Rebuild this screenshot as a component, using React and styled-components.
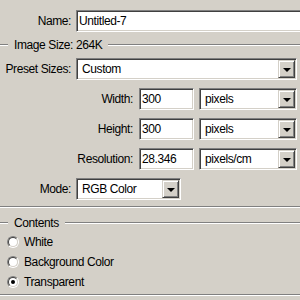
import React from 'react';
import styled, { createGlobalStyle } from 'styled-components';

const GlobalStyle = createGlobalStyle`
html, body {
  margin: 0;
  padding: 0;
  background: #d4d0c8;
}
`

const Dialog = styled.div`
width: 300px;
height: 300px;
overflow: hidden;
background: #d4d0c8;
font-family: "Liberation Sans", Arial, sans-serif;
font-size: 12px;
letter-spacing: -0.4px;
color: #000;
display: flex;
flex-direction: column;
`
const Row = styled.div`
display: flex;
align-items: center;
height: 22px;
margin-top: ${p => p.$top || 0}px;
margin-left: ${p => p.$left || 0}px;
flex-shrink: 0;
`
const Label = styled.div`
width: ${p => p.$width}px;
margin-right: ${p => p.$gap || 5}px;
text-align: right;
flex-shrink: 0;
white-space: nowrap;
`
const Sunken = styled.div`
box-sizing: border-box;
height: 22px;
width: ${p => p.$width}px;
flex-shrink: 0;
background: #fff;
border: 1px solid;
border-color: #808080 #fff #fff #808080;
box-shadow: inset 1px 1px #404040, inset -1px -1px #d4d0c8;
display: flex;
align-items: center;
white-space: nowrap;
overflow: hidden;
`
const InputText = styled.span`
padding-left: ${p => p.$pad || 2}px;
flex: 1;
`
const DropButton = styled.div`
box-sizing: border-box;
width: 17px;
height: 18px;
margin-right: 1px;
flex-shrink: 0;
background: #d4d0c8;
border: 1px solid;
border-color: #d4d0c8 #404040 #404040 #d4d0c8;
box-shadow: inset 1px 1px #fff, inset -1px -1px #808080;
display: flex;
align-items: center;
justify-content: center;
&::after {
  content: '';
  width: 0;
  height: 0;
  border-left: 4px solid transparent;
  border-right: 4px solid transparent;
  border-top: 4px solid #000;
  margin-top: 1px;
}
`
const Group = styled.div`
display: flex;
align-items: center;
height: 14px;
margin-top: ${p => p.$top || 0}px;
flex-shrink: 0;
`
const Line = styled.div`
height: 0;
border-top: 1px solid #808080;
border-bottom: 1px solid #fff;
width: ${p => (p.$width ? `${p.$width}px` : 'auto')};
flex: ${p => (p.$width ? '0 0 auto' : '1')};
`
const GroupTitle = styled.span`
padding: 0 6px;
white-space: nowrap;
`
const Separator = styled(Line)`
margin-top: ${p => p.$top || 0}px;
flex: 0 0 auto;
`
const RadioRow = styled.label`
display: flex;
align-items: center;
height: 20px;
padding-left: 7px;
margin-top: ${p => p.$top || 0}px;
flex-shrink: 0;
`
const RadioOuter = styled.span`
box-sizing: border-box;
width: 12px;
height: 12px;
border-radius: 50%;
border: 1px solid;
border-color: #808080 #fff #fff #808080;
margin-right: 5px;
display: flex;
`
const RadioInner = styled.span`
box-sizing: border-box;
flex: 1;
border-radius: 50%;
border: 1px solid;
border-color: #404040 #d4d0c8 #d4d0c8 #404040;
background: #fff;
display: flex;
align-items: center;
justify-content: center;
&::after {
  content: '';
  width: 4px;
  height: 4px;
  border-radius: 50%;
  background: ${p => (p.$checked ? '#000' : 'transparent')};
}
`

const Select = ({ width, value }) => (
  <Sunken $width={width}>
    <InputText $pad={5}>{value}</InputText>
    <DropButton />
  </Sunken>
);

const Radio = ({ label, checked, top }) => (
  <RadioRow $top={top}>
    <RadioOuter><RadioInner $checked={checked} /></RadioOuter>
    {label}
  </RadioRow>
);

const DimRow = ({ label, value, unit, top }) => (
  <Row $top={top}>
    <Label $width={133} $gap={6}>{label}</Label>
    <Sunken $width={55}><InputText>{value}</InputText></Sunken>
    <Row $left={5}>
      <Select width={98} value={unit} />
    </Row>
  </Row>
);

export default function App() {
  return (
    <Dialog>
      <GlobalStyle />
      <Row $top={10}>
        <Label $width={71}>Name:</Label>
        <Sunken $width={240}><InputText>Untitled-7</InputText></Sunken>
      </Row>
      <Group $top={6}>
        <Line $width={8} />
        <GroupTitle>Image Size: 264K</GroupTitle>
        <Line />
      </Group>
      <Row $top={6}>
        <Label $width={71}>Preset Sizes:</Label>
        <Select width={221} value="Custom" />
      </Row>
      <DimRow top={8} label="Width:" value="300" unit="pixels" />
      <DimRow top={8} label="Height:" value="300" unit="pixels" />
      <DimRow top={8} label="Resolution:" value="28.346" unit="pixels/cm" />
      <Row $top={8}>
        <Label $width={71}>Mode:</Label>
        <Select width={105} value="RGB Color" />
      </Row>
      <Separator $top={6} />
      <Group $top={8}>
        <Line $width={8} />
        <GroupTitle>Contents</GroupTitle>
        <Line />
      </Group>
      <Radio top={2} label="White" />
      <Radio label="Background Color" />
      <Radio label="Transparent" checked />
      <Separator $top={2} />
    </Dialog>
  );
}
